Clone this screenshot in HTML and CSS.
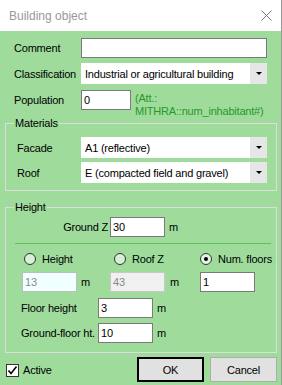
FILE: index.html
```html
<!DOCTYPE html>
<html>
<head>
<meta charset="utf-8">
<link rel="stylesheet" href="styles.css">
</head>
<body>
<div class="window">
  <div class="titlebar">
    <span class="title">Building object</span>
    <svg class="close" width="11" height="11" viewBox="0 0 11 11"><path d="M0.5 0.5L10.5 10.5M10.5 0.5L0.5 10.5" stroke="#7a7a7a" stroke-width="1" fill="none"/></svg>
  </div>
  <div class="content">
    <div class="row top r-comment"><span class="lbl">Comment</span><div class="field wide"></div></div>
    <div class="row top r-class"><span class="lbl">Classification</span><div class="combo wide"><span class="ctext">Industrial or agricultural building</span><span class="dd"><span class="tri"></span></span></div></div>
    <div class="row top r-pop"><span class="lbl">Population</span><div class="field pop">0</div><div class="att">(Att.:<br>MITHRA::num_inhabitant#)</div></div>

    <div class="group materials">
      <span class="legend">Materials</span>
      <div class="row mrow"><span class="mlbl">Facade</span><div class="combo wide"><span class="ctext">A1 (reflective)</span><span class="dd"><span class="tri"></span></span></div></div>
      <div class="row mrow roof"><span class="mlbl">Roof</span><div class="combo wide"><span class="ctext">E (compacted field and gravel)</span><span class="dd"><span class="tri"></span></span></div></div>
    </div>

    <div class="group heightg">
      <span class="legend">Height</span>
      <div class="row gz"><span class="gzlbl">Ground Z</span><div class="field num">30</div><span class="unit">m</span></div>
      <div class="sep"></div>
      <div class="radios">
        <div class="radio"><span class="circle"></span><span>Height</span></div>
        <div class="radio"><span class="circle"></span><span>Roof Z</span></div>
        <div class="radio"><span class="circle on"><span class="dot"></span></span><span>Num. floors</span></div>
      </div>
      <div class="vals">
        <div class="cell"><div class="field num dis-cyan">13</div><span class="unit u1">m</span></div>
        <div class="cell"><div class="field num dis-gray">43</div><span class="unit u2">m</span></div>
        <div class="cell"><div class="field num">1</div></div>
      </div>
      <div class="row frow fh"><span class="flbl">Floor height</span><div class="field num">3</div><span class="unit">m</span></div>
      <div class="row frow gf"><span class="flbl">Ground-floor ht.</span><div class="field num">10</div><span class="unit">m</span></div>
    </div>

    <div class="footer">
      <span class="check"><svg width="11" height="11" viewBox="0 0 11 11"><path d="M1.5 5.5L4 8.5L9.5 1.5" stroke="#000" stroke-width="1.6" fill="none"/></svg></span>
      <span class="active">Active</span>
      <button class="btn ok">OK</button>
      <button class="btn cancel">Cancel</button>
    </div>
  </div>
</div>
</body>
</html>
```
FILE: styles.css
```css
* { box-sizing: border-box; margin: 0; padding: 0; }
html, body { width: 282px; height: 385px; overflow: hidden; }
body {
  font-family: "Liberation Sans", Arial, sans-serif;
  font-size: 11px;
  letter-spacing: -0.2px;
  color: #000;
  background: #9fdc9c;
}
.window {
  width: 282px;
  height: 385px;
  background: #9fdc9c;
  border-right: 1px solid #9a9a9a;
}
.titlebar {
  height: 31px;
  background: #fff;
  display: flex;
  align-items: center;
  padding-left: 9px;
}
.title { font-size: 12px; color: #999; letter-spacing: 0; }
.close { margin-left: auto; margin-right: 9px; margin-top: -1px; }

.row { display: flex; align-items: center; }
.top { padding-left: 14px; }
.lbl { width: 67px; }
.r-comment { margin-top: 7px; height: 20px; }
.r-class { margin-top: 5px; height: 21px; }
.r-pop { margin-top: 6px; height: 20px; align-items: flex-start; }
.r-pop .lbl { align-self: center; }

.field {
  height: 20px;
  background: #fff;
  border: 1px solid #7a7a7a;
  padding-left: 2px;
  display: flex;
  align-items: center;
}
.wide { width: 186px; }
.field.pop { width: 50px; }
.field.num { width: 55px; }
.dis-cyan { background: #f0ffff; border-color: #bdbdbd; color: #8a8a8a; }
.dis-gray { background: #f0f0f0; border-color: #c8c8c8; color: #8a8a8a; }

.att {
  margin-left: 4px;
  margin-top: 2px;
  line-height: 13px;
  color: #2a962a;
  white-space: nowrap;
}

.combo {
  height: 21px;
  background: #fff;
  display: flex;
  align-items: center;
}
.ctext { padding-left: 4px; flex: 1; white-space: nowrap; }
.dd {
  width: 17px;
  height: 21px;
  background: #e6e6e6;
  display: flex;
  align-items: center;
  justify-content: center;
}
.tri {
  width: 0; height: 0;
  border-left: 3px solid transparent;
  border-right: 3px solid transparent;
  border-top: 3px solid #000;
}

.group {
  position: relative;
  margin-left: 5px;
  width: 272px;
  border: 1px solid #dcdcdc;
}
.legend {
  position: absolute;
  top: -7px;
  left: 8px;
  padding: 0 1px 0 1px;
  background: #9fdc9c;
  line-height: 13px;
}
.materials { margin-top: 13px; padding: 13px 8px 7px 11px; }
.mlbl { width: 64px; }
.mrow { height: 21px; }
.roof { margin-top: 4px; }

.heightg { margin-top: 16px; padding: 9px 5px 9px 9px; }
.gz { height: 20px; }
.gzlbl { width: 93px; text-align: right; margin-right: 2px; }
.unit { margin-left: 4px; }
.sep { margin-top: 6px; height: 1px; background: #5fbf5c; }

.radios {
  margin-top: 8px;
  margin-left: 9px;
  height: 13px;
  display: grid;
  grid-template-columns: 90px 86px auto;
  align-items: center;
}
.radio { display: flex; align-items: center; gap: 6px; white-space: nowrap; }
.circle {
  flex: none;
  width: 12px; height: 12px;
  border-radius: 50%;
  border: 1px solid #333;
  background: #d8f1d6;
  display: flex; align-items: center; justify-content: center;
}
.circle.on { background: #e4f5e3; }
.dot { width: 4px; height: 4px; border-radius: 50%; background: #000; }

.vals {
  margin-top: 7px;
  margin-left: 7px;
  height: 20px;
  display: grid;
  grid-template-columns: 88px 90px auto;
}
.cell { display: flex; align-items: center; }
.u2 { margin-left: 5px; }

.frow { margin-left: 6px; height: 20px; }
.fh { margin-top: 6px; }
.gf { margin-top: 5px; }
.flbl { width: 77px; white-space: nowrap; }

.footer {
  margin-top: 4px;
  margin-left: 5px;
  width: 272px;
  height: 25px;
  display: flex;
  align-items: center;
}
.check {
  margin-left: 1px;
  margin-top: 1px;
  width: 13px; height: 13px;
  background: #fff;
  border: 1px solid #333;
  display: flex; align-items: center; justify-content: center;
}
.active { margin-left: 4px; margin-top: 1px; }
.btn {
  font-family: "Liberation Sans", Arial, sans-serif;
  font-size: 11px;
  letter-spacing: -0.2px;
  color: #000;
  width: 67px;
  height: 25px;
  background: #e1e1e1;
}
.ok { margin-left: auto; border: 2px solid #000; }
.cancel { margin-left: 6px; border: 1px solid #adadad; }
```
